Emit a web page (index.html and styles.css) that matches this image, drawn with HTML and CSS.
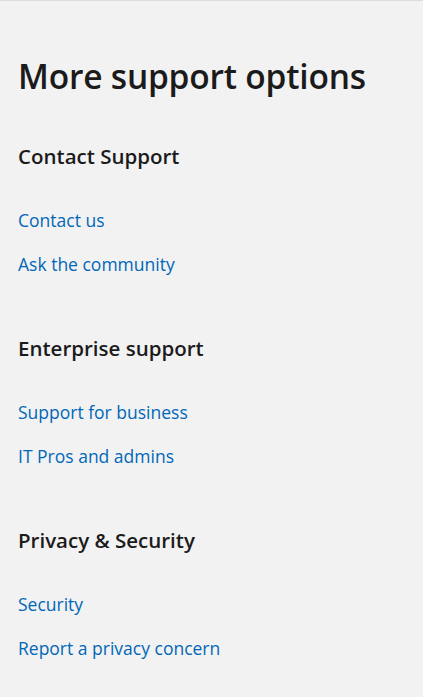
FILE: index.html
```html
<!DOCTYPE html>
<html lang="en">
<head>
<meta charset="utf-8">
<link rel="stylesheet" href="styles.css">
</head>
<body>
<main class="page">
  <h1 class="title">More support options</h1>
  <section class="group">
    <h2 class="group-title">Contact Support</h2>
    <ul class="links">
      <li><a href="#">Contact us</a></li>
      <li><a href="#">Ask the community</a></li>
    </ul>
  </section>
  <section class="group">
    <h2 class="group-title">Enterprise support</h2>
    <ul class="links">
      <li><a href="#">Support for business</a></li>
      <li><a href="#">IT Pros and admins</a></li>
    </ul>
  </section>
  <section class="group">
    <h2 class="group-title">Privacy &amp; Security</h2>
    <ul class="links">
      <li><a href="#">Security</a></li>
      <li><a href="#">Report a privacy concern</a></li>
    </ul>
  </section>
</main>
</body>
</html>
```
FILE: styles.css
```css
html, body {
  margin: 0;
  padding: 0;
  background: #f2f2f2;
}
body {
  font-family: "Open Sans", "Noto Sans", sans-serif;
  color: #1b1b1b;
  border-top: 1px solid #dcdcdc;
  min-height: 696px;
}
.page {
  padding: 53px 18px 0;
}
.title {
  margin: 0;
  font-size: 33.5px;
  font-weight: 600;
  line-height: 44px;
  letter-spacing: -0.2px;
}
.group {
  margin-top: 44px;
}
.group + .group {
  margin-top: 58px;
}
.group-title {
  margin: 0;
  font-size: 20.5px;
  font-weight: 600;
  line-height: 28px;
}
.links {
  list-style: none;
  margin: 38px 0 0;
  padding: 0;
  display: flex;
  flex-direction: column;
  gap: 20px;
}
.links a {
  display: block;
  font-size: 17.5px;
  line-height: 24px;
  color: #0067b8;
  text-decoration: none;
}
```
